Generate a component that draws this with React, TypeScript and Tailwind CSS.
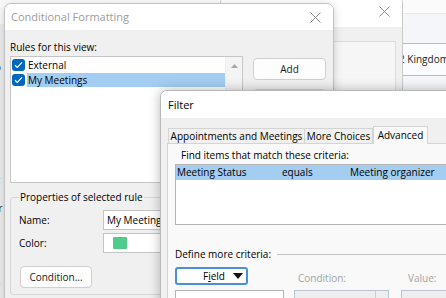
import type { ReactNode } from 'react'

const ui = "font-['Open_Sans','Noto_Sans',sans-serif]"

function CloseX({ color }: { color: string }) {
  return (
    <svg width="11" height="11" viewBox="0 0 11 11" className={color}>
      <path d="M0.5 0.5L10.5 10.5M10.5 0.5L0.5 10.5" stroke="currentColor" strokeWidth="1" />
    </svg>
  )
}

function Check() {
  return (
    <span className="flex h-[12px] w-[13px] items-center justify-center rounded-[3px] bg-[#0067c0]">
      <svg width="9" height="8" viewBox="0 0 9 8">
        <path d="M1 4.2L3.3 6.4L8 1.4" fill="none" stroke="white" strokeWidth="1.2" />
      </svg>
    </span>
  )
}

function WinButton({ children, className = '' }: { children: ReactNode; className?: string }) {
  return (
    <div
      className={`flex h-[22px] items-center justify-center rounded-[4px] border border-[#d0d0d0] bg-[#fdfdfd] text-[10px] text-[#1b1b1b] ${className}`}
    >
      {children}
    </div>
  )
}

function BackApp() {
  return (
    <>
      {/* fragments of the app behind, left edge */}
      <div className="absolute left-0 top-[24px] h-[274px] w-[6px] bg-[#eeeeee]">
        <div className="flex flex-col text-[10px] leading-[12px] text-[#333]">
          <span className="ml-[-5px] mt-[37px]">o</span>
          <span className="ml-[-5px] mt-[103px]">F</span>
          <span className="ml-[-7px] mt-[14px]">er</span>
          <span className="ml-[-6px] mt-[22px]">n</span>
          <span className="ml-[-5px] mt-[28px] text-[#888]">a</span>
        </div>
      </div>

      {/* right-hand app area */}
      <div className="absolute left-[398px] top-0 h-[92px] w-[48px] bg-[#f4f6f9]">
        <div className="h-[14px] border-b border-[#e6e9ee] bg-[#fbfbfb]" />
        <div className="mt-[29px] h-[33px] border-y border-[#9cc0e6] bg-[#fbfcfe] pl-[1px] pt-[1px]">
          <span className="whitespace-nowrap text-[10px] leading-[14px] text-[#222]">2 Kingdom</span>
        </div>
      </div>

      {/* window behind the dialogs */}
      <div className="absolute left-[220px] top-[-4px] flex h-[100px] w-[183px] flex-col overflow-hidden rounded-[7px] border border-[#c9c9c9] bg-[#f0f0f0]">
        <div className="flex h-[30px] shrink-0 items-start justify-end bg-white pr-[12px] pt-[9px]">
          <CloseX color="text-[#8a8a8a]" />
        </div>
        <div className="ml-auto mr-[6px] mt-[14px] h-[60px] w-[100px] border border-[#dcdcdc] bg-[#f6f6f6]" />
      </div>
    </>
  )
}

function ConditionalFormatting() {
  return (
    <div className="absolute left-[4px] top-[3px] h-[310px] w-[330px] overflow-hidden rounded-[7px] border border-[#c2c2c2] bg-[#f0f0f0] shadow-[0_2px_10px_rgba(0,0,0,0.18)]">
      <div className="flex h-[26px] items-center justify-between bg-white pl-[6px] pr-[12px]">
        <span className="text-[11px] text-[#9d9d9d]">Conditional Formatting</span>
        <CloseX color="text-[#8a8a8a]" />
      </div>

      <div className="px-[5px] pt-[10px]">
        <p className="text-[10px] leading-[14px] text-black">Rules for this view:</p>

        <div className="mt-[2px] flex gap-[10px]">
          <div className="flex h-[127px] w-[233px] border border-[#c6c6c6] bg-white">
            <div className="flex-1">
              <div className="flex h-[15px] items-center gap-[2px] pl-[1px]">
                <Check />
                <span className="flex-1 pl-[1px] text-[10px] leading-[14px] text-black">External</span>
              </div>
              <div className="flex h-[15px] items-center gap-[2px] pl-[1px]">
                <Check />
                <span className="flex-1 bg-[#a3cdf1] pl-[1px] text-[10px] leading-[14px] text-black">My Meetings</span>
              </div>
            </div>
            <div className="flex w-[17px] justify-center border-l border-[#ededed] bg-[#f4f4f4] pt-[7px]">
              <svg width="7" height="4" viewBox="0 0 7 4">
                <path d="M3.5 0L7 4H0Z" fill="#a8a8a8" />
              </svg>
            </div>
          </div>

          <div className="flex w-[73px] flex-col gap-[9px] pt-[2px]">
            <WinButton>Add</WinButton>
            <WinButton>Delete</WinButton>
          </div>
        </div>

        <fieldset className="mt-[7px] w-[316px] rounded-[3px] border border-[#d6d6d6] px-[8px] pb-[6px]">
          <legend className="px-[1px] text-[10px] leading-[14px] text-black">Properties of selected rule</legend>
          <div className="mt-[6px] flex items-center">
            <span className="w-[84px] text-[10px] text-black">Name:</span>
            <div className="h-[20px] w-[200px] border border-[#c4c4c4] bg-white pl-[3px] text-[10px] leading-[18px] text-black">
              My Meetings
            </div>
          </div>
          <div className="mt-[3px] flex items-center">
            <span className="w-[84px] text-[10px] text-black">Color:</span>
            <div className="flex h-[20px] w-[200px] items-center border border-[#c4c4c4] bg-white pl-[9px]">
              <span className="h-[12px] w-[14px] rounded-[1px] bg-[#50cb8b]" />
            </div>
          </div>
          <WinButton className="ml-[1px] mt-[13px] w-[72px]">Condition...</WinButton>
        </fieldset>
      </div>
    </div>
  )
}

function Tab({ label, width, active }: { label: string; width: string; active?: boolean }) {
  return active ? (
    <div
      className={`${width} -mb-px flex h-[18px] items-center justify-center border border-b-0 border-[#d4d4d4] bg-[#f9f9f9] text-[10px] text-black`}
    >
      {label}
    </div>
  ) : (
    <div
      className={`${width} flex h-[15px] items-center justify-center border border-b-0 border-l-0 border-[#d4d4d4] bg-[#f0f0f0] text-[10px] text-black first:border-l`}
    >
      {label}
    </div>
  )
}

function Filter() {
  return (
    <div className="absolute left-[160px] top-[90px] h-[230px] w-[300px] overflow-hidden rounded-[7px] border border-[#b9b9b9] bg-[#f0f0f0] shadow-[0_0_12px_rgba(0,0,0,0.28)]">
      <div className="flex h-[27px] items-center bg-white pl-[7px] pt-[1px]">
        <span className="text-[11px] text-black">Filter</span>
      </div>

      <div className="pl-[6px] pt-[8px]">
        <div className="flex items-end pl-[1px]">
          <Tab label="Appointments and Meetings" width="w-[137px]" />
          <Tab label="More Choices" width="w-[68px]" />
          <Tab label="Advanced" width="w-[55px]" active />
        </div>

        <div className="h-[200px] border border-r-0 border-[#d4d4d4] bg-[#f9f9f9] pl-[7px] pt-[4px]">
          <p className="ml-[6px] text-[10px] leading-[14px] text-black">Find items that match these criteria:</p>

          <div className="mt-[2px] h-[61px] border border-r-0 border-[#b4b4b4] bg-white">
            <div className="flex h-[15px] items-center bg-[#a3cdf1] pl-[1px] text-[10px] whitespace-nowrap text-black">
              <span className="w-[105px]">Meeting Status</span>
              <span className="w-[68px]">equals</span>
              <span>Meeting organizer</span>
            </div>
          </div>

          <div className="mt-[22px] flex items-center gap-[6px]">
            <span className="text-[10px] leading-[14px] text-black">Define more criteria:</span>
            <span className="h-px flex-1 bg-[#c4c4c4]" />
          </div>

          <div className="mt-[6px] flex items-end">
            <div className="w-[123px]">
              <div className="flex h-[18px] w-[73px] items-center justify-between rounded-[3px] border-2 border-[#4a90d9] bg-white pl-[26px] pr-[3px] text-[10px] text-black">
                <span>
                  F<span className="underline">i</span>eld
                </span>
                <svg width="10" height="6" viewBox="0 0 10 6">
                  <path d="M0 0H10L5 6Z" fill="#111" />
                </svg>
              </div>
            </div>
            <span className="w-[110px] text-[10px] leading-[13px] text-[#a3a3a3]">Condition:</span>
            <span className="text-[10px] leading-[13px] text-[#a3a3a3]">Value:</span>
          </div>

          <div className="mt-[5px] flex gap-[10px]">
            <div className="h-[22px] w-[113px] border border-[#b4b4b4] bg-white" />
            <div className="flex h-[22px] w-[98px] justify-end border border-[#b8c4d2] bg-[#eeeeee]">
              <span className="w-[13px] border-l border-[#c9ced6]" />
            </div>
            <div className="ml-[2px] h-[22px] w-[60px] border border-[#b8c4d2] bg-[#eeeeee]" />
          </div>
        </div>
      </div>
    </div>
  )
}

export default function App() {
  return (
    <div className={`relative h-[298px] w-[446px] overflow-hidden bg-[#fafafa] ${ui}`}>
      <BackApp />
      <ConditionalFormatting />
      <Filter />
    </div>
  )
}
